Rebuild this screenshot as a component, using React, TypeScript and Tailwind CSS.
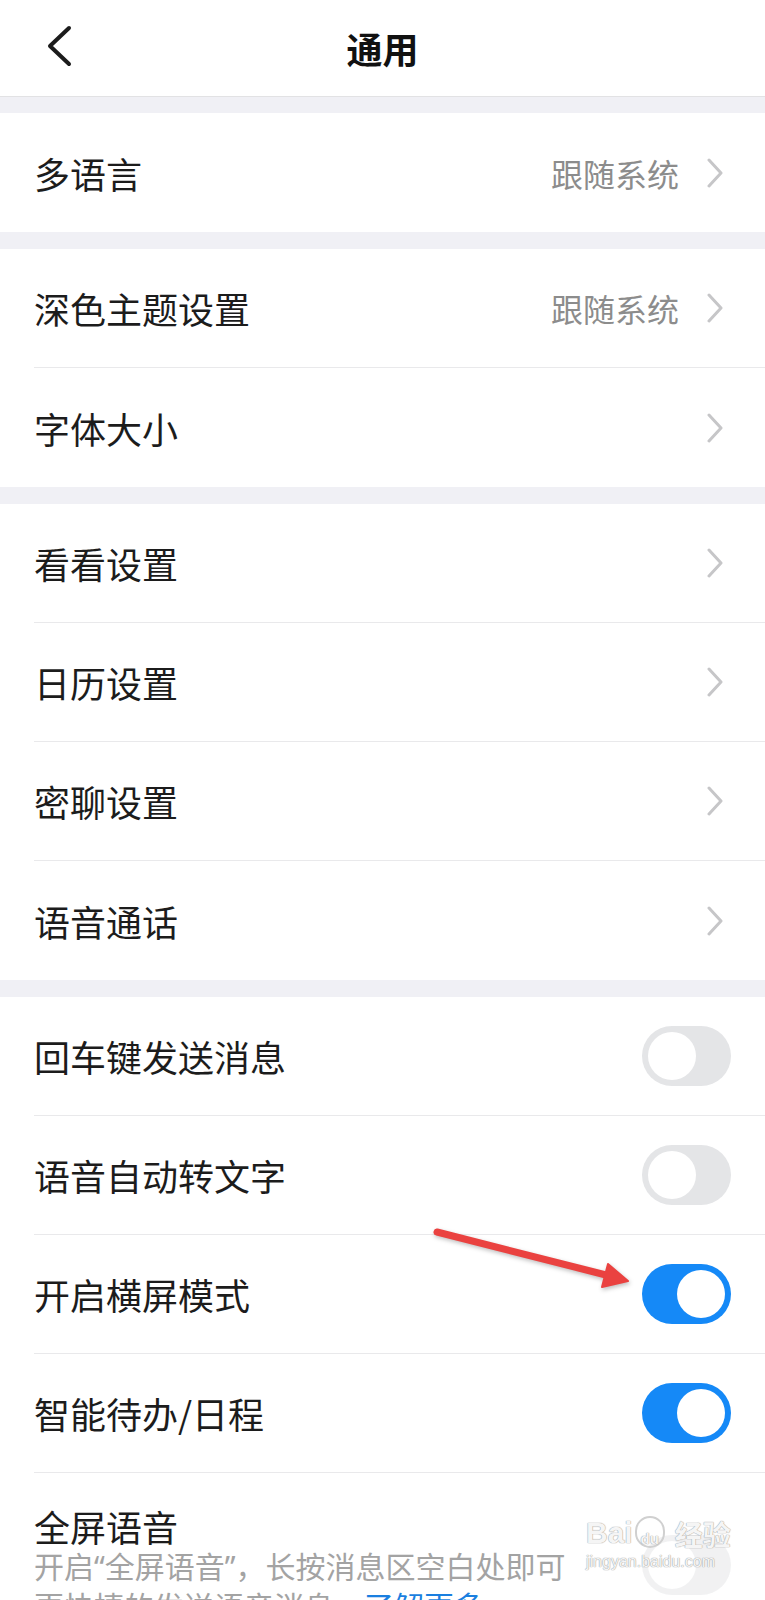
import React from "react";

type Item = {
  label: string;
  value?: string;
  toggle?: boolean;
  on?: boolean;
};

const sections: Item[][] = [
  [{ label: "多语言", value: "跟随系统" }],
  [{ label: "深色主题设置", value: "跟随系统" }, { label: "字体大小" }],
  [
    { label: "看看设置" },
    { label: "日历设置" },
    { label: "密聊设置" },
    { label: "语音通话" },
  ],
  [
    { label: "回车键发送消息", toggle: true, on: false },
    { label: "语音自动转文字", toggle: true, on: false },
    { label: "开启横屏模式", toggle: true, on: true },
    { label: "智能待办/日程", toggle: true, on: true },
  ],
];

function Chevron() {
  return (
    <svg width="16" height="30" viewBox="0 0 16 30" className="shrink-0">
      <polyline
        points="2,2 14,15 2,28"
        fill="none"
        stroke="#c6c6c8"
        strokeWidth="3"
        strokeLinecap="round"
        strokeLinejoin="round"
      />
    </svg>
  );
}

function Toggle({ on }: { on: boolean }) {
  return (
    <div
      className={`flex h-[60px] w-[89px] shrink-0 items-center rounded-full px-[6px] ${
        on ? "justify-end bg-[#1589f7]" : "justify-start bg-[#e4e5e7]"
      }`}
    >
      <div className="h-[48px] w-[48px] rounded-full bg-white" />
    </div>
  );
}

function Row({ item, last }: { item: Item; last: boolean }) {
  return (
    <div className="h-[119px] pl-[34px]">
      <div
        className={`flex h-full items-center justify-between ${
          item.toggle ? "pr-[34px]" : "pr-[42px]"
        } ${last ? "" : "border-b border-[#e9e9eb]"}`}
      >
        <span className="text-[36px] leading-none text-[#1c1c1c]">{item.label}</span>
        {item.toggle ? (
          <Toggle on={!!item.on} />
        ) : (
          <div className="flex items-center gap-[28px]">
            {item.value && (
              <span className="text-[32px] leading-none text-[#8c8c8c]">{item.value}</span>
            )}
            <Chevron />
          </div>
        )}
      </div>
    </div>
  );
}

export default function App() {
  return (
    <div className="relative h-[1600px] w-full overflow-hidden bg-[#f0f0f5] font-['Noto_Sans_CJK_SC','Noto_Sans',sans-serif]">
      {/* header */}
      <div className="relative flex h-[97px] items-center justify-center border-b border-[#e2e2e4] bg-white">
        <svg width="28" height="44" viewBox="0 0 28 44" className="absolute left-[46px] top-[24px]">
          <polyline
            points="23,4 4,22 23,40"
            fill="none"
            stroke="#1c1c1c"
            strokeWidth="4"
            strokeLinecap="round"
            strokeLinejoin="round"
          />
        </svg>
        <span className="text-[36px] font-bold leading-none text-[#111]">通用</span>
      </div>

      {sections.map((sec, si) => (
        <div key={si} className={`${si === 0 ? "mt-[16px]" : "mt-[17px]"} bg-white`}>
          {sec.map((item, i) => (
            <Row key={item.label} item={item} last={i === sec.length - 1 && si !== 3} />
          ))}
          {si === 3 && (
            <div className="flex items-center justify-between pl-[34px] pr-[34px] pt-[33px] pb-[60px]">
              <div>
                <div className="text-[36px] leading-[40px] text-[#1c1c1c]">全屏语音</div>
                <div className="text-[30px] leading-[38px] text-[#a3a3a3]">
                  <div className="whitespace-nowrap">
                    开启<span className="font-['Noto_Sans',sans-serif]">“</span>全屏语音
                    <span className="font-['Noto_Sans',sans-serif]">”</span>，长按消息区空白处即可
                  </div>
                  <div className="whitespace-nowrap">
                    更快捷的发送语音消息。<span className="text-[#1a7fe0]">了解更多</span>
                  </div>
                </div>
              </div>
              <div className="opacity-50">
                <Toggle on={false} />
              </div>
            </div>
          )}
        </div>
      ))}

      {/* Baidu watermark */}
      <div className="absolute left-[586px] top-[1516px] flex flex-col items-start text-white/90 [text-shadow:0_0_1px_#9a9a9a,0_0_1px_#9a9a9a]">
        <div className="flex items-end font-['Liberation_Sans',sans-serif] text-[30px] font-bold leading-none">
          <span>Bai</span>
          <span className="relative mx-[2px] flex h-[32px] w-[30px] items-end justify-center rounded-full border-2 border-[#d0d0d0] text-[15px]">
            du
          </span>
          <span className="ml-[8px] font-['Noto_Sans_CJK_SC',sans-serif] text-[28px]">经验</span>
        </div>
        <div className="mt-[6px] font-['Liberation_Sans',sans-serif] text-[16px] leading-none">jingyan.baidu.com</div>
      </div>

      {/* red arrow annotation */}
      <svg className="pointer-events-none absolute left-0 top-0" width="765" height="1600" viewBox="0 0 765 1600">
        <g fill="#ea4240" stroke="#ea4240" style={{ filter: "drop-shadow(1px 2px 2px rgba(0,0,0,0.25))" }}>
          <line x1="437" y1="1232" x2="606" y2="1275" strokeWidth="7" strokeLinecap="round" />
          <polygon points="628,1281 602,1287 608,1264" strokeWidth="2" strokeLinejoin="round" />
        </g>
      </svg>
    </div>
  );
}
